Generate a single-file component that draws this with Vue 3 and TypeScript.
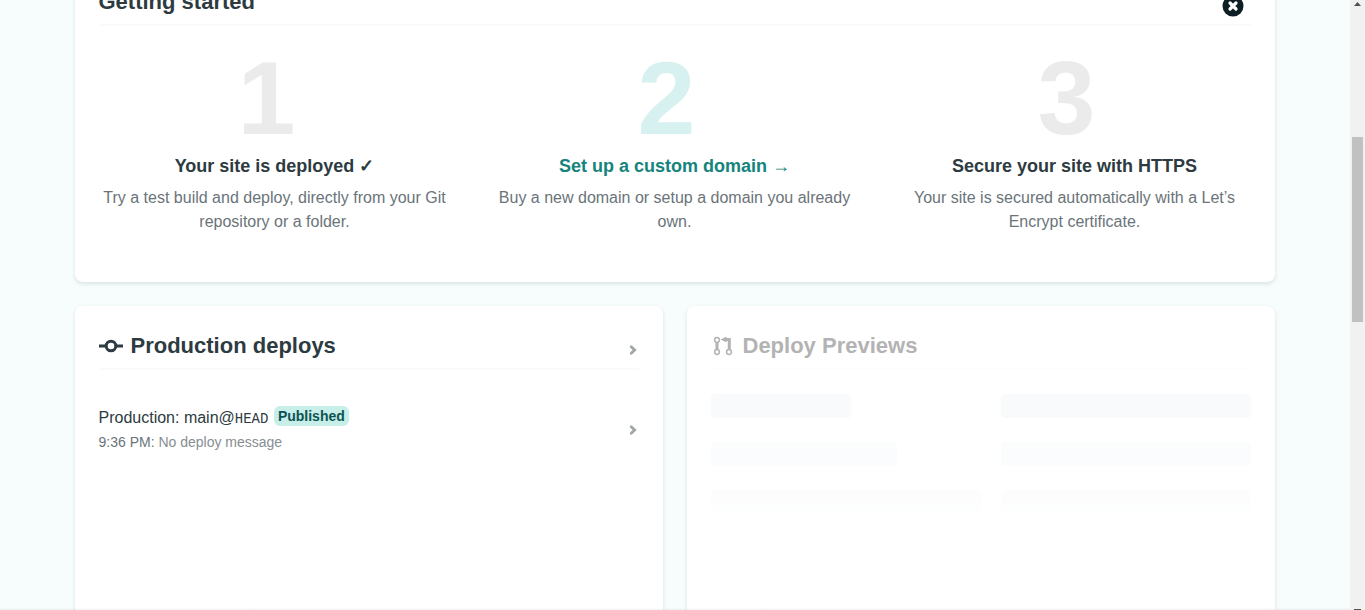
<script setup lang="ts">
interface Step {
  title: string
  text: string
  current?: boolean
}

const steps: Step[] = [
  { title: 'Your site is deployed ✓', text: 'Try a test build and deploy, directly from your Git repository or a folder.' },
  { title: 'Set up a custom domain →', text: 'Buy a new domain or setup a domain you already own.', current: true },
  { title: 'Secure your site with HTTPS', text: 'Your site is secured automatically with a Let’s Encrypt certificate.' },
]

// Width of the left placeholder in each row, as a share of the list
const placeholders = [26.1, 34.6, 50]
</script>

<template>
  <div class="app">
    <main class="page">
      <div class="content">
        <section class="card intro">
          <header class="card-head">
            <h2>Getting started</h2>
            <button class="close" type="button" aria-label="Dismiss">
              <svg width="22" height="22" viewBox="0 0 22 22" aria-hidden="true">
                <circle cx="11" cy="11" r="10.5" fill="#0e1e25" />
                <path d="M8 8l6 6M14 8l-6 6" stroke="#fff" stroke-width="3.2" stroke-linecap="round" />
              </svg>
            </button>
          </header>
          <ol class="steps">
            <li v-for="(step, i) in steps" :key="step.title" class="step" :class="{ current: step.current }">
              <span class="num">{{ i + 1 }}</span>
              <h3>
                <a v-if="step.current" href="#domain">{{ step.title }}</a>
                <template v-else>{{ step.title }}</template>
              </h3>
              <p>{{ step.text }}</p>
            </li>
          </ol>
        </section>

        <div class="columns">
          <section class="card">
            <header class="card-head">
              <svg class="icon" width="24" height="24" viewBox="0 0 24 24" fill="none" stroke="currentColor" stroke-width="3" aria-hidden="true">
                <circle cx="12" cy="12" r="4.8" />
                <path d="M0 12h7M17 12h7" />
              </svg>
              <h2>Production deploys</h2>
              <a class="more" href="#deploys" aria-label="All production deploys">
                <svg width="12" height="12" viewBox="0 0 12 12" aria-hidden="true">
                  <path d="M4.2 2.8L7.6 6 4.2 9.2" />
                </svg>
              </a>
            </header>
            <a class="deploy" href="#deploy">
              <span class="deploy-text">
                <span class="deploy-title">Production: main@<code>HEAD</code> <span class="badge">Published</span></span>
                <span class="deploy-note"><time>9:36 PM:</time> No deploy message</span>
              </span>
              <svg class="chevron" width="12" height="12" viewBox="0 0 12 12" aria-hidden="true">
                <path d="M4.2 2.8L7.6 6 4.2 9.2" />
              </svg>
            </a>
          </section>

          <section class="card">
            <header class="card-head muted">
              <svg class="icon" width="24" height="24" viewBox="0 0 24 24" fill="none" stroke="currentColor" aria-hidden="true">
                <g stroke-width="1.5">
                  <circle cx="6" cy="6" r="2.4" />
                  <circle cx="6" cy="18" r="2.4" />
                  <circle cx="18" cy="18" r="2.4" />
                </g>
                <path d="M6 8.5v7M14 5.5h4.3v10" stroke-width="3" />
                <path d="M9.5 5.5l6-3v6z" fill="currentColor" stroke="none" />
              </svg>
              <h2>Deploy Previews</h2>
            </header>
            <div class="skeleton">
              <div v-for="(width, i) in placeholders" :key="i" class="row" :class="`row-${i + 1}`">
                <span class="bar" :style="{ width: `${width}%` }"></span>
                <span class="bar wide"></span>
              </div>
            </div>
          </section>
        </div>
      </div>
    </main>
    <div class="scrollbar" aria-hidden="true">
      <svg width="15" height="15" viewBox="0 0 15 15"><path d="M4 6L7.5 2 11 6z" fill="#505050" /></svg>
      <div class="track"><div class="thumb"></div></div>
      <span class="down"></span>
    </div>
  </div>
</template>

<style>
body {
  margin: 0;
  overflow: hidden;
}
</style>

<style scoped>
.app {
  display: flex;
  height: 100vh;
  overflow: hidden;
  font: 16px/24px "Liberation Sans", Arial, sans-serif;
  color: #2d3b41;
}
.page {
  position: relative;
  flex: 1;
  min-width: 0;
  padding-right: 1px;
  overflow: hidden;
  background: #f7fdfd;
}
.page::after {
  content: "";
  position: absolute;
  inset: auto 0 0;
  height: 2px;
  background: linear-gradient(rgba(14, 30, 37, 0.01), rgba(14, 30, 37, 0.05));
}
.content {
  max-width: 1200px;
  margin: -38px auto 0;
}
.card {
  box-sizing: border-box;
  padding: 24px;
  border-radius: 8px;
  background: #fff;
  box-shadow: 0 2px 4px rgba(14, 30, 37, 0.12);
}
.intro {
  padding-bottom: 48px;
}
.card-head {
  display: flex;
  align-items: center;
  gap: 8px;
  height: 32px;
  padding-bottom: 6px;
  border-bottom: 2px solid #fafafa;
}
h2 {
  margin: 0;
  font-size: 22px;
  line-height: 32px;
}
.icon {
  flex: none;
}
.close {
  width: 22px;
  height: 22px;
  margin: 8px 7px 0 auto;
  padding: 0;
  border: 0;
  background: none;
  cursor: pointer;
}
.close svg {
  display: block;
}
.steps {
  display: grid;
  grid-template-columns: repeat(3, 1fr);
  gap: 48px;
  margin: 0;
  padding: 24px 0 0;
  list-style: none;
}
.step {
  text-align: center;
}
.num {
  display: block;
  height: 104px;
  padding-right: 16px;
  font-size: 104px;
  font-weight: bold;
  line-height: 96px;
  color: #ebebeb;
}
.current .num {
  color: #d6f1ef;
}
h3 {
  margin: 0 0 8px;
  font-size: 18px;
  line-height: 24px;
}
h3 a {
  color: #15847d;
  text-decoration: none;
}
p {
  margin: 0;
  color: #6a7479;
}
.columns {
  display: grid;
  grid-template-columns: 1fr 1fr;
  gap: 24px;
  margin-top: 24px;
}
.columns .card {
  min-height: 360px;
}
.more {
  display: flex;
  margin: 8px 0 0 auto;
}
.more svg,
.chevron {
  flex: none;
  fill: none;
  stroke: #9fa5a8;
  stroke-width: 2.8;
  stroke-linecap: round;
}
.deploy {
  display: flex;
  align-items: center;
  justify-content: space-between;
  padding: 36px 0 24px;
  color: inherit;
  text-decoration: none;
}
.deploy-title,
.deploy-note {
  display: block;
}
code {
  font: 14px "Liberation Mono", monospace;
}
.badge {
  display: inline-block;
  margin-left: 1px;
  padding: 0 4px;
  border-radius: 6px;
  background: #c8eeea;
  color: #0c5450;
  font-size: 14px;
  font-weight: bold;
  line-height: 20px;
  vertical-align: text-bottom;
}
.deploy-note {
  font-size: 14px;
  color: #868e92;
}
.deploy-note time {
  color: #6a7479;
}
.muted {
  color: #b3b3b3;
  border-color: #fdfdfd;
}
.skeleton {
  display: grid;
  gap: 24px;
  padding-top: 24px;
}
.row {
  display: flex;
  justify-content: space-between;
}
.bar {
  height: 24px;
  border-radius: 4px;
  background: #f9fafc;
}
.wide {
  width: 46.2%;
}
.row-2 .bar {
  background: linear-gradient(#fbfcfc, #fbfcfe);
}
.row-3 .bar {
  background: linear-gradient(#fdfdfd 60%, #fdfffe 70%);
}
.scrollbar {
  display: flex;
  flex-direction: column;
  flex: none;
  width: 15px;
  background: #f1f1f1;
}
.track {
  flex: 1;
  padding: 0 2px;
}
.track::before {
  content: "";
  display: block;
  height: 20.5%;
}
.thumb {
  height: 31.2%;
  background: #c1c1c1;
}
.down {
  width: 7px;
  height: 1px;
  margin: 0 auto;
  background: #505050;
}
</style>
